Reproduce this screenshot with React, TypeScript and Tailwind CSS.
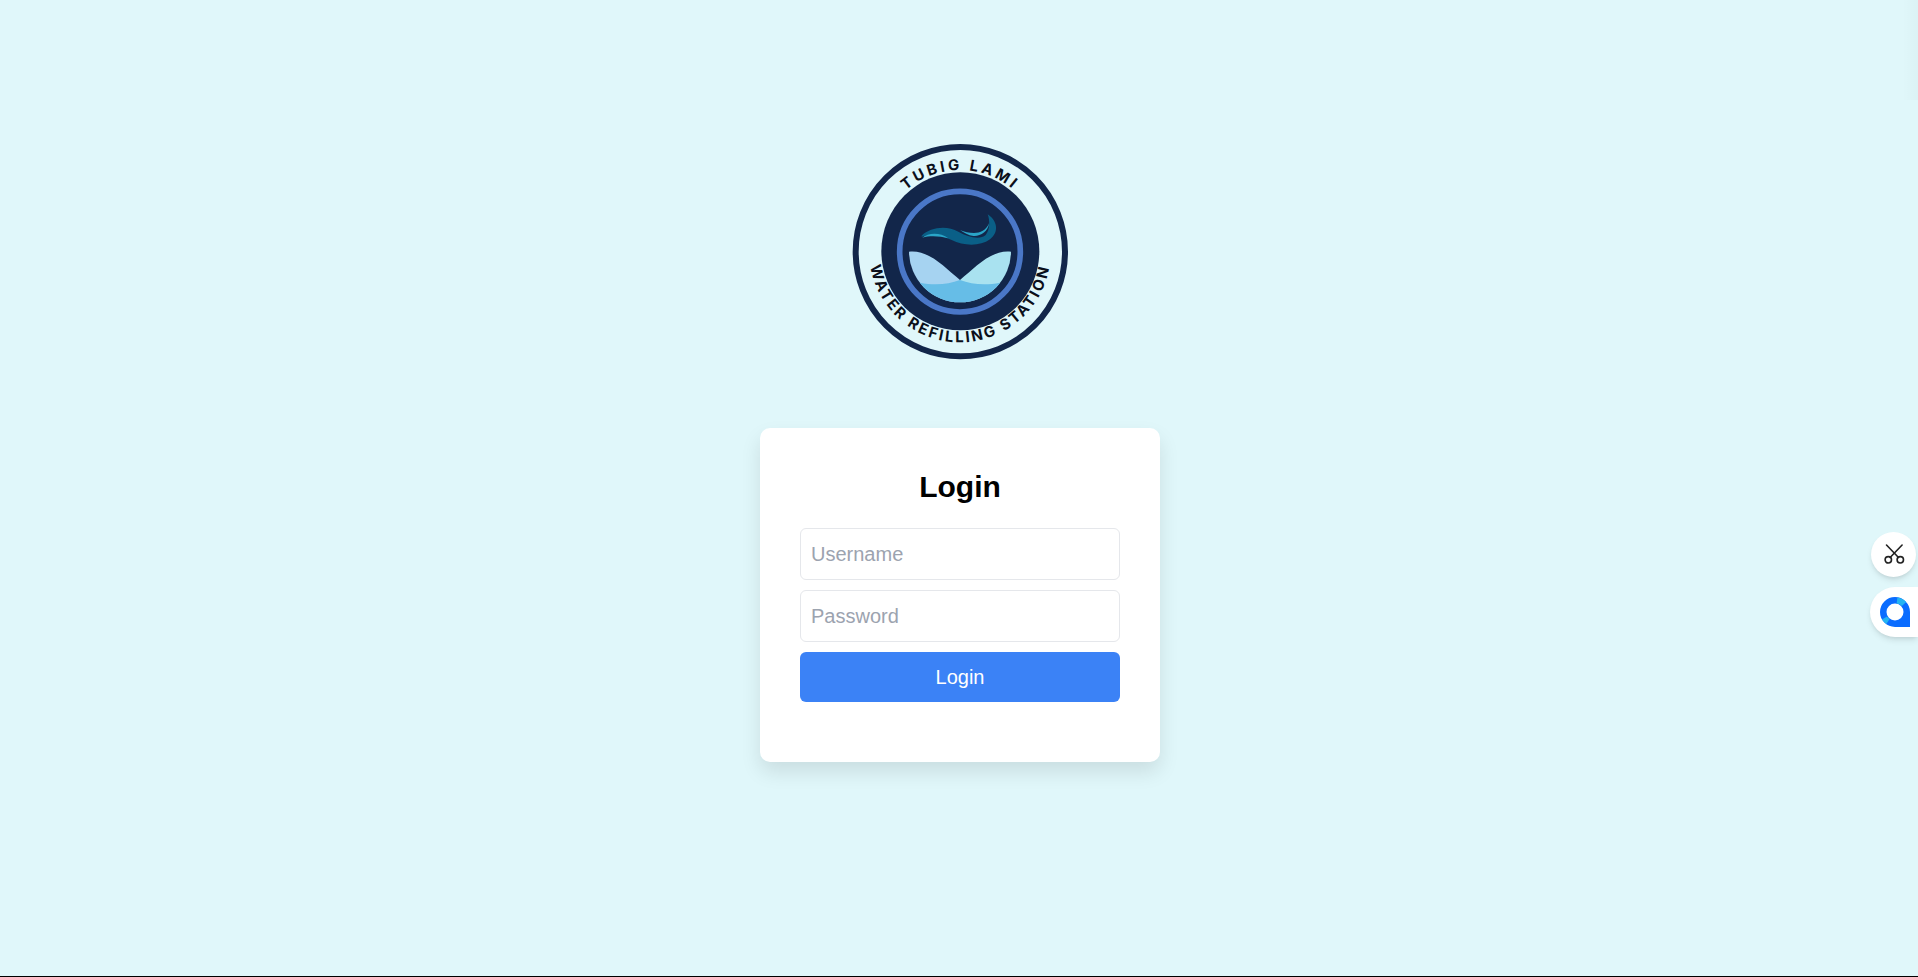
function Logo() {
  return (
    <svg viewBox="0 0 720 720" className="w-[240px] h-[240px] shrink-0">
      <defs>
        <path id="arcTop" d="M115,365 A245,245 0 0 1 605,365" fill="none" />
        <path id="arcBottom" d="M88,365 A272,272 0 0 0 632,365" fill="none" />
        <clipPath id="bowl">
          <circle cx="360" cy="364" r="153" />
        </clipPath>
      </defs>

      <circle cx="361" cy="365" r="314" fill="none" stroke="#12264a" strokeWidth="18" />
      <circle cx="361" cy="364" r="237" fill="#12264a" />
      <circle cx="360" cy="365" r="181" fill="none" stroke="#4a77c7" strokeWidth="17" />

      <text fontFamily="Inter, sans-serif" fontWeight="700" fontSize="45" fill="#0b0f1a" letterSpacing="9">
        <textPath href="#arcTop" startOffset="50%" textAnchor="middle">TUBIG LAMI</textPath>
      </text>
      <text fontFamily="Inter, sans-serif" fontWeight="700" fontSize="45" fill="#0b0f1a" letterSpacing="7">
        <textPath href="#arcBottom" startOffset="50%" textAnchor="middle">WATER REFILLING STATION</textPath>
      </text>

      <g clipPath="url(#bowl)">
        <path d="M207,365 C265,358 312,410 360,450 L360,530 L200,530 L200,365 Z" fill="#a6d3f1" />
        <path d="M513,365 C455,358 408,410 360,450 L360,530 L520,530 L520,365 Z" fill="#a9e2f0" />
        <path d="M240,458 C280,466 325,464 360,450 C395,464 440,466 480,458 L480,530 L240,530 Z" fill="#66bde7" />
      </g>

      {/* wave */}
      <path d="M245,317 C270,292 320,285 355,305 C385,322 420,330 437,315 C450,300 450,270 443,253 C470,270 480,305 450,328 C420,350 370,348 335,330 C305,315 270,310 245,320 Z" fill="#0a5f87" />
      <path d="M247,323 C265,308 300,306 325,325 C300,318 270,316 247,323 Z" fill="#2aa5c8" />
      <path d="M360,300 C390,312 432,318 447,280 C445,305 420,320 400,318 C385,316 372,308 360,300 Z" fill="#2aa5c8" />
    </svg>
  );
}

function ScissorsGlyph() {
  return (
    <svg viewBox="0 0 24 24" fill="none" stroke="#222" strokeWidth="1.6" strokeLinecap="round" className="h-6 w-6">
      <circle cx="6.3" cy="16.8" r="3.2" />
      <circle cx="18.3" cy="16.8" r="3.2" />
      <path d="M4.5 2 L16.5 14.5" />
      <path d="M20.1 2 L8.1 14.5" />
    </svg>
  );
}

function ChatGlyph() {
  return (
    <svg viewBox="0 0 32 32" className="h-8 w-8">
      <path
        fillRule="evenodd"
        d="M16,1 A15,15 0 0 1 31,16 L31,31 L20,31 L16,31 A15,15 0 0 1 16,1 Z M16,7.5 A8.5,8.5 0 1 0 16,24.5 A8.5,8.5 0 1 0 16,7.5 Z"
        fill="#0a6cff"
      />
      {/* lighter spots on the ring */}
      <path d="M18,4.5 A11.7,11.7 0 0 1 25,8" fill="none" stroke="#25b4f2" strokeWidth="6" />
      <path d="M5.5,22 A11.7,11.7 0 0 0 9,25.5" fill="none" stroke="#25b4f2" strokeWidth="6" />
    </svg>
  );
}

export default function App() {
  return (
    <div className="relative h-[977px] overflow-hidden border-b border-black bg-[#e0f7fa] font-['Liberation_Sans',Arial,sans-serif]">
      <div className="flex flex-col items-center pl-[2px] pt-[130px]">
        <Logo />

        <div className="mt-[58px] h-[334px] w-[400px] rounded-[10px] bg-white p-10 shadow-[0_10px_20px_rgba(0,0,0,0.1)]">
          <h1 className="mb-[23px] mt-px text-center text-3xl font-bold text-black">Login</h1>
          <form className="flex flex-col gap-[10px]">
            <input
              type="text"
              placeholder="Username"
              className="h-[52px] w-full rounded-md border border-gray-200 px-[10px] text-xl placeholder:text-[#9ca3af]"
            />
            <input
              type="password"
              placeholder="Password"
              className="h-[52px] w-full rounded-md border border-gray-200 px-[10px] text-xl placeholder:text-[#9ca3af]"
            />
            <button type="button" className="h-[50px] w-full rounded-md bg-[#3b82f6] text-xl text-white">
              Login
            </button>
          </form>
        </div>
      </div>

      {/* faint shade on the right edge */}
      <div className="absolute right-0 top-0 h-[100px] w-[16px] bg-gradient-to-l from-black/2 to-transparent" />

      {/* floating extension buttons */}
      <div className="absolute left-[1871px] top-[532px] flex h-[45px] w-[45px] items-center justify-center rounded-full bg-white shadow-md">
        <ScissorsGlyph />
      </div>
      <div className="absolute left-[1870px] right-0 top-[587px] flex h-[50px] items-center rounded-l-full bg-white pl-[9px] shadow-md">
        <ChatGlyph />
      </div>
    </div>
  );
}
